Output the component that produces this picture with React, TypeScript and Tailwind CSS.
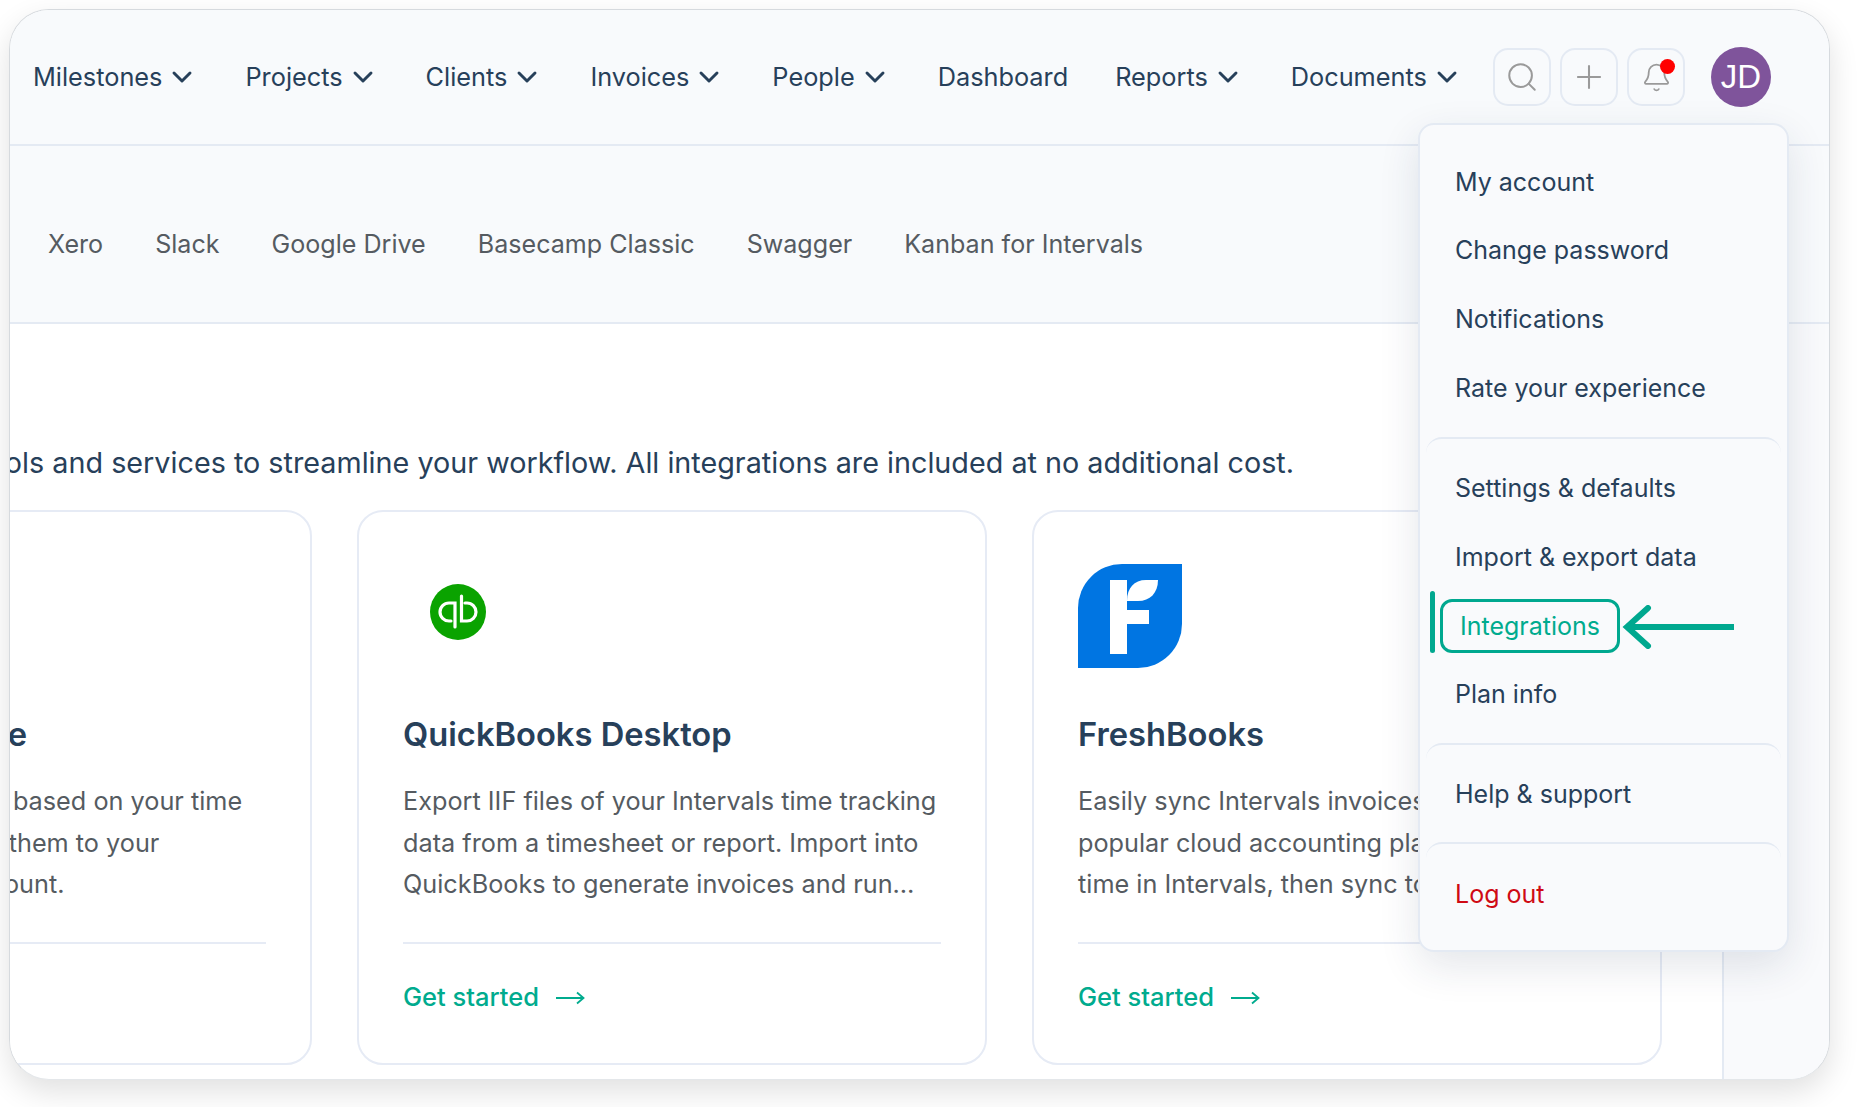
import { ChevronDown, Search, Plus, Bell } from "lucide-react";

const navItems = [
    { label: "Milestones", caret: true },
    { label: "Projects", caret: true },
    { label: "Clients", caret: true },
    { label: "Invoices", caret: true },
    { label: "People", caret: true },
    { label: "Dashboard", caret: false },
    { label: "Reports", caret: true },
    { label: "Documents", caret: true },
];

const subNav = ["Xero", "Slack", "Google Drive", "Basecamp Classic", "Swagger", "Kanban for Intervals"];

function QuickBooksLogo() {
    return (
        <svg viewBox="0 0 56 56" className="w-[56px] h-[56px]">
            <circle cx="28" cy="28" r="28" fill="#0aa300" />
            <path d="M25 43V19H19a9 9 0 0 0 0 18H21" fill="none" stroke="#fff" strokeWidth="3.2" strokeLinecap="round" />
            <path d="M31.5 12V37H37a9 9 0 0 0 0-18H35" fill="none" stroke="#fff" strokeWidth="3.2" strokeLinecap="round" />
        </svg>
    );
}

function FreshBooksLogo() {
    return (
        <svg viewBox="0 0 104 104" className="w-[104px] h-[104px]">
            <path d="M44 0H104V60A44 44 0 0 1 60 104H0V44A44 44 0 0 1 44 0Z" fill="#0075e2" />
            <path d="M32 16H49V46H71V60H49V90H32Z" fill="#fff" />
            <path d="M49 37C49 24 56 16 68 16H80C80 29 72 37 60 37Z" fill="#fff" />
        </svg>
    );
}

function Card({ logo, title, lines }: { logo?: React.ReactNode; title: string; lines: string[] }) {
    return (
        <div className="w-[630px] h-[555px] shrink-0 rounded-[26px] border-2 border-[#e6ebf5] bg-white px-[44px] pt-[52px]">
            <div className="h-[104px]">{logo}</div>
            <h3 className="mt-[46px] text-[32.7px] leading-[40px] font-semibold text-[#27405a] whitespace-nowrap">{title}</h3>
            <div className="mt-[27px] text-[25.25px] leading-[41.6px] text-[#555b61]">
                {lines.map((line) => (
                    <div key={line} className="whitespace-nowrap">{line}</div>
                ))}
            </div>
            <div className="mt-[36px] border-t-2 border-[#e6ebf5] pt-[35px] flex items-center gap-[16px] text-[#00ab8e] text-[25.5px] leading-[36px] font-medium">
                <span>Get started</span>
                <svg viewBox="0 0 30 14" className="w-[30px] h-[14px] mt-[3px]" fill="none" stroke="currentColor" strokeWidth="1.8">
                    <path d="M1 7H28M22 1.5L28.5 7L22 12.5" />
                </svg>
            </div>
        </div>
    );
}

function MenuItem({ children, className }: { children: React.ReactNode; className?: string }) {
    return <div className={"h-[68.7px] flex items-center pl-[35px] " + (className ?? "text-[#27405a]")}>{children}</div>;
}

function AccountMenu() {
    return (
        <div className="absolute left-[1408px] top-[113px] w-[371px] h-[829px] rounded-[16px] border-2 border-[#e4eaf3] bg-[#f9fafc] shadow-[0_14px_40px_rgba(30,50,80,0.12)] text-[25px]">
            <div className="pt-[23px] pb-[14px]">
                <MenuItem>My account</MenuItem>
                <MenuItem>Change password</MenuItem>
                <MenuItem>Notifications</MenuItem>
                <MenuItem>Rate your experience</MenuItem>
            </div>
            <div className="mx-[6px] rounded-t-[16px] border-t-2 border-[#e4eaf3] pt-[16px] pb-[13px]">
                <div className="-mx-[6px]">
                    <MenuItem>Settings &amp; defaults</MenuItem>
                    <MenuItem>Import &amp; export data</MenuItem>
                    <div className="relative h-[68.7px] flex items-center pl-[20px]">
                        <span className="absolute left-[10px] top-[-1px] w-[5px] h-[62px] rounded-full bg-[#00a88f]" />
                        <span className="h-[54px] w-[180px] flex items-center justify-center rounded-[12px] border-[3px] border-[#00a88f] text-[#00ab8e]">Integrations</span>
                        <svg viewBox="0 0 112 44" className="absolute left-[202px] top-[13px] w-[112px] h-[44px]" fill="none" stroke="#00a88f">
                            <path d="M6 22H112" strokeWidth="6" />
                            <path d="M26 3L5 22L26 41" strokeWidth="6" strokeLinecap="round" />
                        </svg>
                    </div>
                    <MenuItem>Plan info</MenuItem>
                </div>
            </div>
            <div className="mx-[6px] rounded-t-[16px] border-t-2 border-[#e4eaf3] pt-[15.5px] pb-[13px]">
                <div className="-mx-[6px]">
                    <MenuItem>Help &amp; support</MenuItem>
                </div>
            </div>
            <div className="mx-[6px] rounded-t-[16px] border-t-2 border-[#e4eaf3] pt-[17px]">
                <div className="-mx-[6px]">
                    <MenuItem className="text-[#cf0a14]">Log out</MenuItem>
                </div>
            </div>
        </div>
    );
}

export default function App() {
    return (
        <div className="w-[1857px] h-[1107px] bg-white pt-[9px] pl-[9px] font-['Inter',sans-serif] overflow-hidden">
            <div className="relative w-[1821px] h-[1071px] rounded-[40px] border border-[#d6dade] border-b-[#e4e7ea] bg-white overflow-hidden shadow-[0_12px_30px_rgba(0,0,0,0.12)]">
                <nav className="h-[136px] bg-[#f8fafc] border-b-2 border-[#e4eaf3] flex items-center pl-[23px] pr-[58px]">
                    <div className="flex items-center gap-[47px] text-[25.3px] text-[#27405a]">
                        {navItems.map((item) => (
                            <div key={item.label} className="flex items-center gap-[4px]">
                                <span>{item.label}</span>
                                {item.caret && <ChevronDown className="w-[32px] h-[32px]" strokeWidth={2.2} />}
                            </div>
                        ))}
                    </div>
                    <div className="ml-auto flex items-center gap-[9px] text-[#9a9a9a]">
                        <div className="w-[58px] h-[58px] rounded-[15px] border-2 border-[#e4eaf3] flex items-center justify-center">
                            <Search className="w-[34px] h-[34px]" strokeWidth={1.4} />
                        </div>
                        <div className="w-[58px] h-[58px] rounded-[15px] border-2 border-[#e4eaf3] flex items-center justify-center">
                            <Plus className="w-[38px] h-[38px]" strokeWidth={1.3} />
                        </div>
                        <div className="relative w-[58px] h-[58px] rounded-[15px] border-2 border-[#e4eaf3] flex items-center justify-center">
                            <Bell className="w-[31px] h-[31px]" strokeWidth={1.4} />
                            <span className="absolute left-[31px] top-[9px] w-[15px] h-[15px] rounded-full bg-[#ff0000]" />
                        </div>
                    </div>
                    <div className="ml-[26px] w-[60px] h-[60px] rounded-full bg-[#7f549b] text-white text-[33px] font-['Liberation_Sans',sans-serif] flex items-center justify-center">JD</div>
                </nav>
                <div className="h-[178px] bg-[#f8fafc] border-b-2 border-[#e4eaf3] flex items-center pl-[38px] pt-[21px] gap-[52px] text-[25.1px] text-[#555b61]">
                    {subNav.map((item) => (
                        <span key={item}>{item}</span>
                    ))}
                </div>
                <div className="flex h-[755px]">
                    <main className="w-[1712px] pt-[114px]">
                        <div className="w-[1284px] h-[50px] flex justify-end items-center">
                            <p className="shrink-0 whitespace-nowrap text-[28.75px] text-[#27405a]">Connect Intervals with your favorite tools and services to streamline your workflow. All integrations are included at no additional cost.</p>
                        </div>
                        <div className="mt-[22px] ml-[-328px] flex gap-[45px]">
                            <Card
                                title="QuickBooks Online"
                                lines={["Generate draft invoices based on your time", "tracked data, and send them to your", "QuickBooks Online account."]}
                            />
                            <Card
                                logo={<div className="pl-[27px] pt-[20px]"><QuickBooksLogo /></div>}
                                title="QuickBooks Desktop"
                                lines={["Export IIF files of your Intervals time tracking", "data from a timesheet or report. Import into", "QuickBooks to generate invoices and run…"]}
                            />
                            <Card
                                logo={<FreshBooksLogo />}
                                title="FreshBooks"
                                lines={["Easily sync Intervals invoices with this", "popular cloud accounting platform. Track", "time in Intervals, then sync to FreshBooks."]}
                            />
                        </div>
                    </main>
                    <aside className="flex-1 bg-[#f9fafc] border-l-2 border-[#e4eaf3]" />
                </div>
                <AccountMenu />
            </div>
        </div>
    );
}
